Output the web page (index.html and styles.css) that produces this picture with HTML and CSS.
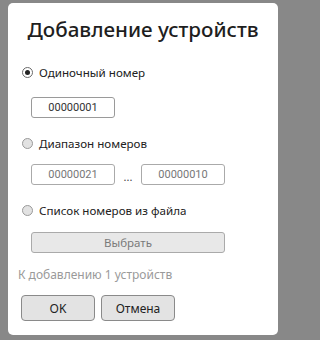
FILE: index.html
```html
<!DOCTYPE html>
<html lang="ru">
<head>
<meta charset="utf-8">
<link rel="stylesheet" href="styles.css">
</head>
<body>
<div class="card">
  <h1 class="title">Добавление устройств</h1>
  <label class="radio-row r1"><span class="radio checked"></span><span class="label">Одиночный номер</span></label>
  <div class="inputs i1"><div class="field">00000001</div></div>
  <label class="radio-row r2"><span class="radio"></span><span class="label">Диапазон номеров</span></label>
  <div class="inputs i2"><div class="field dim">00000021</div><span class="dots">...</span><div class="field dim">00000010</div></div>
  <label class="radio-row r3"><span class="radio"></span><span class="label">Список номеров из файла</span></label>
  <div class="choose">Выбрать</div>
  <div class="status">К добавлению 1 устройств</div>
  <div class="actions"><button class="btn">OK</button><button class="btn">Отмена</button></div>
</div>
</body>
</html>
```
FILE: styles.css
```css
html, body { margin: 0; padding: 0; }
html { background: #888888; }
body { width: 285px; height: 340px; overflow: hidden; font-family: "Noto Sans", "Open Sans", sans-serif; }
.card { margin: 3px 0 0 8px; width: 270px; height: 332px; background: #fff; border-radius: 5px; box-sizing: border-box; padding: 0 0 0 10px; display: flex; flex-direction: column; }
.title { margin: 13px 0 0 -10px; font-size: 20.6px; line-height: 26px; font-weight: 500; color: #1e1e1e; text-align: center; }
.radio-row { display: flex; align-items: center; height: 16px; margin-left: 4px; }
.r1 { margin-top: 22px; }
.r2 { margin-top: 17px; }
.r3 { margin-top: 17px; }
.radio { width: 11px; height: 11px; border-radius: 50%; box-sizing: border-box; border: 1px solid #9a9a9a; background: #e2e2e2; margin-right: 6px; display: flex; align-items: center; justify-content: center; }
.radio.checked { background: #fff; border-color: #6a6a6a; }
.radio.checked::after { content: ""; width: 5px; height: 5px; border-radius: 50%; background: #222; }
.label { font-size: 11.6px; color: #222; }
.inputs { display: flex; align-items: center; margin-left: 13px; }
.i1 { margin-top: 17px; }
.i2 { margin-top: 13px; }
.field { width: 84px; height: 21px; box-sizing: border-box; border: 1px solid #9a9a9a; border-radius: 3px; font-family: Roboto, sans-serif; font-size: 11px; color: #333; display: flex; align-items: center; justify-content: center; }
.field.dim { color: #777; border-color: #aaa; }
.dots { width: 26px; text-align: center; font-size: 11px; color: #444; padding-top: 4px; }
.choose { margin: 14px 0 0 13px; width: 194px; height: 21px; box-sizing: border-box; border: 1px solid #aaa; border-radius: 3px; background: #e8e8e8; color: #7a7a7a; font-size: 11.5px; display: flex; align-items: center; justify-content: center; }
.status { margin-top: 14px; height: 16px; line-height: 16px; font-size: 12px; color: #9a9a9a; }
.actions { display: flex; gap: 6px; margin: 12px 0 0 3px; }
.btn { width: 74px; height: 26px; box-sizing: border-box; border: 1px solid #8a8a8a; border-radius: 4px; background: #e3e3e3; font-family: "Noto Sans", sans-serif; font-size: 12px; color: #222; padding: 0; }
```
